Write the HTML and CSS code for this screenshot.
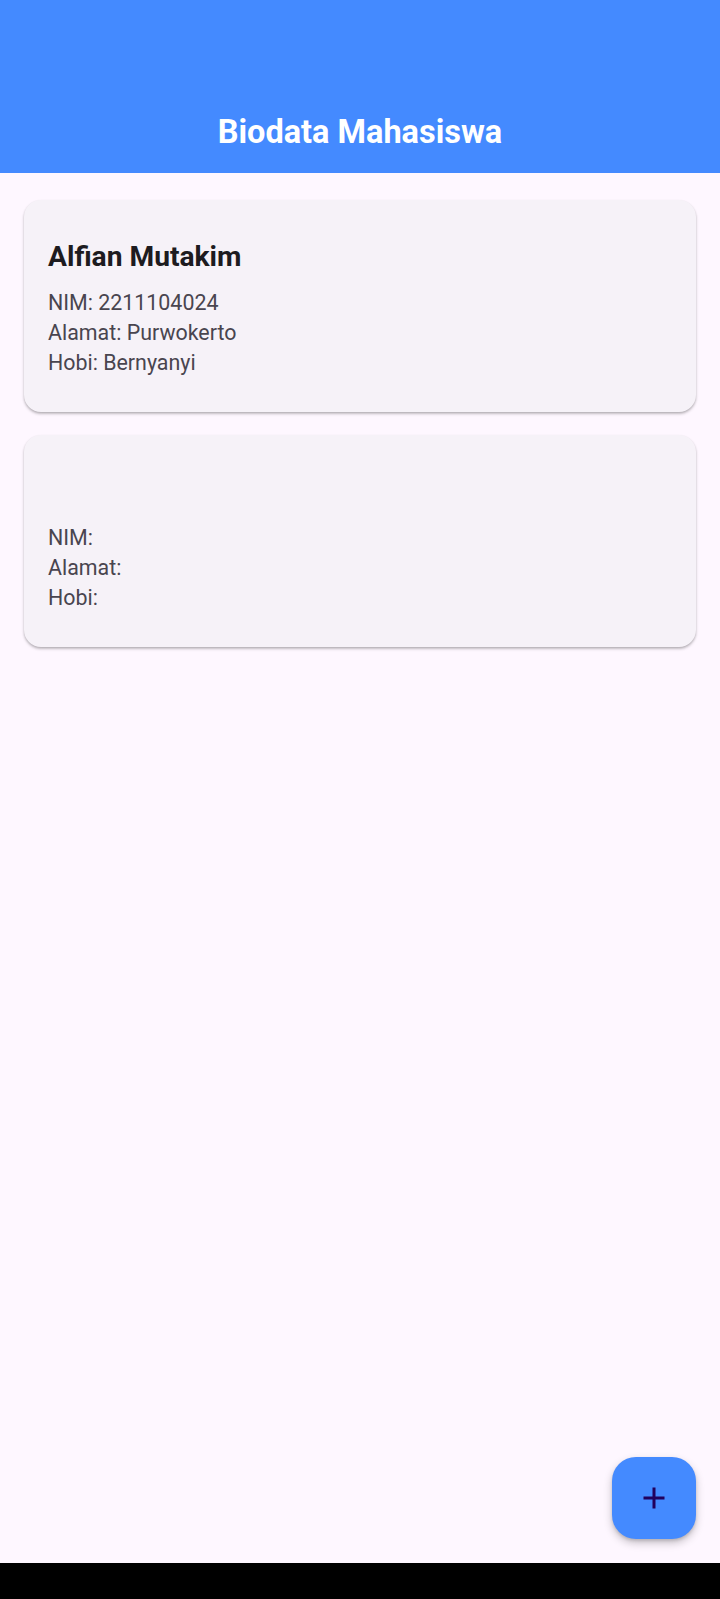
FILE: index.html
```html
<!DOCTYPE html>
<html lang="id">
<head>
<meta charset="utf-8">
<title>Biodata Mahasiswa</title>
<link rel="stylesheet" href="styles.css">
</head>
<body>
<div class="screen">
  <header class="appbar">
    <h1 class="appbar-title">Biodata Mahasiswa</h1>
  </header>
  <main class="list">
    <article class="card">
      <h2 class="card-name">Alfian Mutakim</h2>
      <div class="card-body">
        <p class="line">NIM: 2211104024</p>
        <p class="line">Alamat: Purwokerto</p>
        <p class="line">Hobi: Bernyanyi</p>
      </div>
    </article>
    <article class="card">
      <h2 class="card-name"></h2>
      <div class="card-body">
        <p class="line">NIM: </p>
        <p class="line">Alamat: </p>
        <p class="line">Hobi: </p>
      </div>
    </article>
  </main>
  <button class="fab" aria-label="Tambah">
    <svg class="fab-icon" viewBox="0 0 24 24" width="36" height="36">
      <path d="M19 13h-6v6h-2v-6H5v-2h6V5h2v6h6v2z" fill="currentColor"/>
    </svg>
  </button>
  <div class="navbar"></div>
</div>
</body>
</html>
```
FILE: styles.css
```css
html, body {
  margin: 0;
  padding: 0;
}
body {
  width: 720px;
  height: 1599px;
  overflow: hidden;
  background: #FEF7FF;
  font-family: Roboto, "Noto Sans", sans-serif;
}
.screen {
  position: relative;
  width: 720px;
  height: 1599px;
  display: flex;
  flex-direction: column;
}
.appbar {
  height: 173px;
  background: #448AFF;
  display: flex;
  align-items: flex-end;
  justify-content: center;
  box-sizing: border-box;
  padding-bottom: 23px;
}
.appbar-title {
  margin: 0;
  color: #FFFFFF;
  font-size: 32.5px;
  font-weight: 700;
  line-height: 36px;
}
.list {
  flex: 1;
  display: flex;
  flex-direction: column;
  gap: 23px;
  padding: 27px 24px 0;
}
.card {
  background: #F6F2F8;
  border-radius: 17px;
  height: 212px;
  box-sizing: border-box;
  padding: 41px 24px 0;
  box-shadow: 0 2px 3px rgba(0, 0, 0, 0.22), 0 1px 2px rgba(0, 0, 0, 0.1);
}
.card-name {
  margin: 0;
  height: 32px;
  font-size: 28.2px;
  line-height: 32px;
  font-weight: 700;
  color: #1D1B20;
}
.card-body {
  margin-top: 15px;
}
.line {
  margin: 0;
  font-size: 21.4px;
  line-height: 30px;
  color: #49454F;
  white-space: pre;
}
.fab {
  position: absolute;
  right: 24px;
  bottom: 60px;
  width: 84px;
  height: 82px;
  border: none;
  border-radius: 24px;
  background: #448AFF;
  color: #21005D;
  display: flex;
  align-items: center;
  justify-content: center;
  padding: 0;
  box-shadow: 0 4px 8px rgba(0, 0, 0, 0.22), 0 2px 3px rgba(0, 0, 0, 0.12);
}
.navbar {
  height: 36px;
  background: #000000;
}
```
